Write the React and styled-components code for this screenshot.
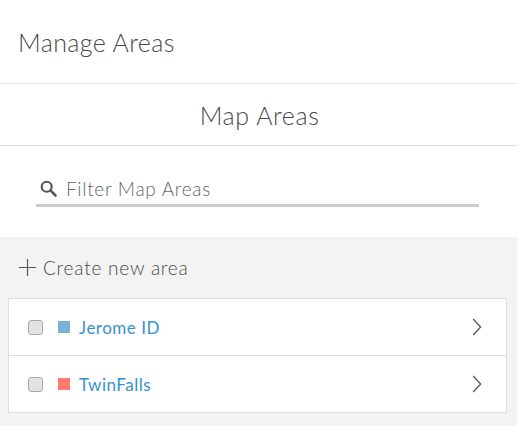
import styled, { createGlobalStyle } from "styled-components";

const GlobalStyle = createGlobalStyle`
  html, body {
    margin: 0;
    padding: 0;
    background: #f3f3f3;
    font-family: "Lato", "Open Sans", sans-serif;
  }
`;

const areas = [
  { name: "Jerome ID", color: "#7ab1d8" },
  { name: "TwinFalls", color: "#ff7d6c" },
];

export default function App() {
  return (
    <>
      <GlobalStyle />
      <Panel>
        <Header>Manage Areas</Header>
        <SubHeader>Map Areas</SubHeader>
        <SearchWrap>
          <SearchField>
            <SearchIcon viewBox="0 0 16 16">
              <circle cx="6.3" cy="6.3" r="4.7" fill="none" stroke="#555" strokeWidth="2" />
              <path d="M9.8 9.8 L14.6 14.6" stroke="#555" strokeWidth="2.4" strokeLinecap="round" />
            </SearchIcon>
            <SearchInput placeholder="Filter Map Areas" />
          </SearchField>
        </SearchWrap>
        <Body>
          <CreateButton>
            <PlusIcon viewBox="0 0 20 20">
              <path d="M10 1 V19 M1 10 H19" stroke="#555" strokeWidth="1.2" />
            </PlusIcon>
            Create new area
          </CreateButton>
          <List>
            {areas.map((a) => (
              <Row key={a.name}>
                <Check />
                <Swatch $color={a.color} />
                <Name>{a.name}</Name>
                <Chevron viewBox="0 0 10 18">
                  <path d="M1.2 1 L8.6 9 L1.2 17" fill="none" stroke="#555" strokeWidth="1.3" />
                </Chevron>
              </Row>
            ))}
          </List>
        </Body>
      </Panel>
    </>
  );
}

const Panel = styled.div`
  width: 517px;
  min-height: 426px;
  display: flex;
  flex-direction: column;
  background: #fff;
`;

const Header = styled.div`
  height: 84px;
  box-sizing: border-box;
  border-bottom: 1px solid #e5e5e5;
  display: flex;
  align-items: center;
  padding-left: 18px;
  font-size: 25px;
  font-weight: 300;
  letter-spacing: 0.4px;
  color: #4a4a4a;
`;

const SubHeader = styled.div`
  height: 62px;
  box-sizing: border-box;
  border-bottom: 1px solid #dcdcdc;
  display: flex;
  align-items: center;
  justify-content: center;
  padding-left: 2px;
  font-size: 25px;
  font-weight: 300;
  letter-spacing: 0.6px;
  color: #4a4a4a;
`;

const SearchWrap = styled.div`
  height: 91px;
  box-sizing: border-box;
  padding: 26px 38px 0 36px;
`;

const SearchField = styled.div`
  display: flex;
  align-items: center;
  gap: 9px;
  height: 32px;
  padding-left: 4px;
  border-bottom: 3px solid #cbcbcb;
`;

const SearchIcon = styled.svg`
  width: 17px;
  height: 17px;
`;

const SearchInput = styled.input`
  border: none;
  outline: none;
  background: transparent;
  font-family: inherit;
  font-size: 19px;
  font-weight: 300;
  letter-spacing: 0.7px;
  color: #4a4a4a;
  flex: 1;
  padding: 0;
  &::placeholder {
    color: #666;
  }
`;

const Body = styled.div`
  flex: 1;
  background: #f3f3f3;
  padding: 0 10px 12px 8px;
`;

const CreateButton = styled.div`
  height: 61px;
  display: flex;
  align-items: center;
  gap: 6px;
  padding-left: 10px;
  font-size: 19px;
  font-weight: 300;
  letter-spacing: 0.8px;
  color: #4a4a4a;
`;

const PlusIcon = styled.svg`
  width: 19px;
  height: 19px;
`;

const List = styled.div`
  background: #fff;
  border: 1px solid #dddddd;
`;

const Row = styled.div`
  height: 56px;
  display: flex;
  align-items: center;
  padding: 0 24px 0 19px;
  & + & {
    border-top: 1px solid #dddddd;
  }
`;

const Check = styled.span`
  width: 15px;
  height: 15px;
  box-sizing: border-box;
  border: 1px solid #a8a8a8;
  border-radius: 3px;
  background: #e2e2e2;
  margin-right: 15px;
`;

const Swatch = styled.span`
  width: 12px;
  height: 12px;
  background: ${(p) => p.$color};
  margin-right: 9px;
`;

const Name = styled.span`
  flex: 1;
  font-size: 17px;
  letter-spacing: 0.5px;
  color: #3592d0;
`;

const Chevron = styled.svg`
  width: 10px;
  height: 18px;
`;
